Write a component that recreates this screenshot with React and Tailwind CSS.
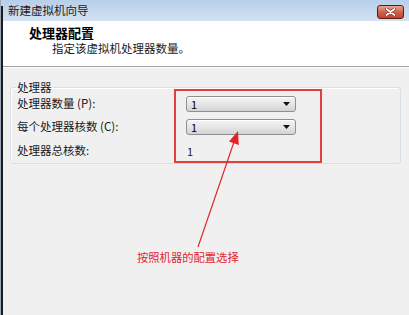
import React from "react";

function Combo() {
  return (
    <div className="w-[110px] h-[16px] rounded-[3px] border border-[#8e8f8f] bg-gradient-to-b from-[#f4f4f4] via-[#e6e6e6] to-[#d3d3d3] flex items-center justify-between pl-[4px] pr-[5px] shadow-[inset_0_1px_0_#ffffff]">
      <span className="text-[11px] leading-none text-black">1</span>
      <svg width="7" height="4" viewBox="0 0 7 4"><polygon points="0,0 7,0 3.5,4" fill="#111" /></svg>
    </div>
  );
}

export default function App() {
  return (
    <div
      className="relative w-[409px] h-[315px] overflow-hidden bg-[#f0f0f0] text-[#1a1a1a]"
      style={{ fontFamily: '"Noto Sans CJK SC", "Noto Sans", sans-serif' }}
    >
      <div className="absolute left-0 top-0 bottom-0 w-[1px] bg-[#9aa8b8]" />
      <div className="absolute left-[1px] top-[6px] bottom-0 w-[2px] bg-[#1c1c1c]" />
      <div className="h-[21px] bg-gradient-to-b from-[#b8cfe9] to-[#d2e2f3] flex items-center justify-between pl-[8px] pr-[5px]">
        <span className="text-[11.5px] leading-none text-[#1b1b1b]">新建虚拟机向导</span>
        <div className="w-[27px] h-[14px] mt-[3px] rounded-[3px] border border-[#5a1d14] bg-gradient-to-b from-[#e8a493] via-[#d0624c] to-[#c2412c] flex items-center justify-center">
          <svg width="11" height="8" viewBox="0 0 11 8">
            <path d="M1.5 1 L9.5 7 M9.5 1 L1.5 7" stroke="#6a2418" strokeWidth="3" strokeLinecap="round" />
            <path d="M1.5 1 L9.5 7 M9.5 1 L1.5 7" stroke="#ffffff" strokeWidth="1.8" strokeLinecap="round" />
          </svg>
        </div>
      </div>
      <div className="h-[46px] bg-white border-b border-[#a0a0a0] pl-[26px] pt-[4px] ml-[3px]">
        <div className="text-[13px] leading-[16px] font-bold text-black">处理器配置</div>
        <div className="text-[11.5px] leading-[15px] pl-[23px] text-[#1a1a1a]">指定该虚拟机处理器数量。</div>
      </div>
      <div className="h-[1px] bg-white ml-[3px]" />
      <fieldset className="mt-[12px] ml-[10px] mr-[8px] border border-[#d5dfe5] rounded-[3px] pl-[6px] pb-[4px] shadow-[inset_1px_1px_0_#ffffff]">
        <legend className="text-[11.5px] leading-[14px] px-[1px] -ml-[1px]">处理器</legend>
        <div className="flex items-center h-[16px] mt-[2px]">
          <div className="w-[169px] text-[11.5px] leading-none">处理器数量 (P):</div>
          <Combo />
        </div>
        <div className="flex items-center h-[16px] mt-[7px]">
          <div className="w-[169px] text-[11.5px] leading-none">每个处理器核数 (C):</div>
          <Combo />
        </div>
        <div className="flex items-center h-[16px] mt-[8px]">
          <div className="w-[170px] text-[11.5px] leading-none">处理器总核数:</div>
          <span className="text-[11px] leading-none">1</span>
        </div>
      </fieldset>

      <div className="absolute left-[174px] top-[89px] w-[148px] h-[74px] border-2 border-[#e0403e]" />
      <svg className="absolute left-0 top-0" width="409" height="315" viewBox="0 0 409 315">
        <line x1="198" y1="247" x2="235" y2="139" stroke="#e02a2a" strokeWidth="1.2" />
        <polygon points="238,131 238.8,145 229,141.6" fill="#e8202a" />
      </svg>
      <div className="absolute left-[137px] top-[249px] text-[11.3px] leading-[16px] text-[#e0262b]">按照机器的配置选择</div>
    </div>
  );
}
